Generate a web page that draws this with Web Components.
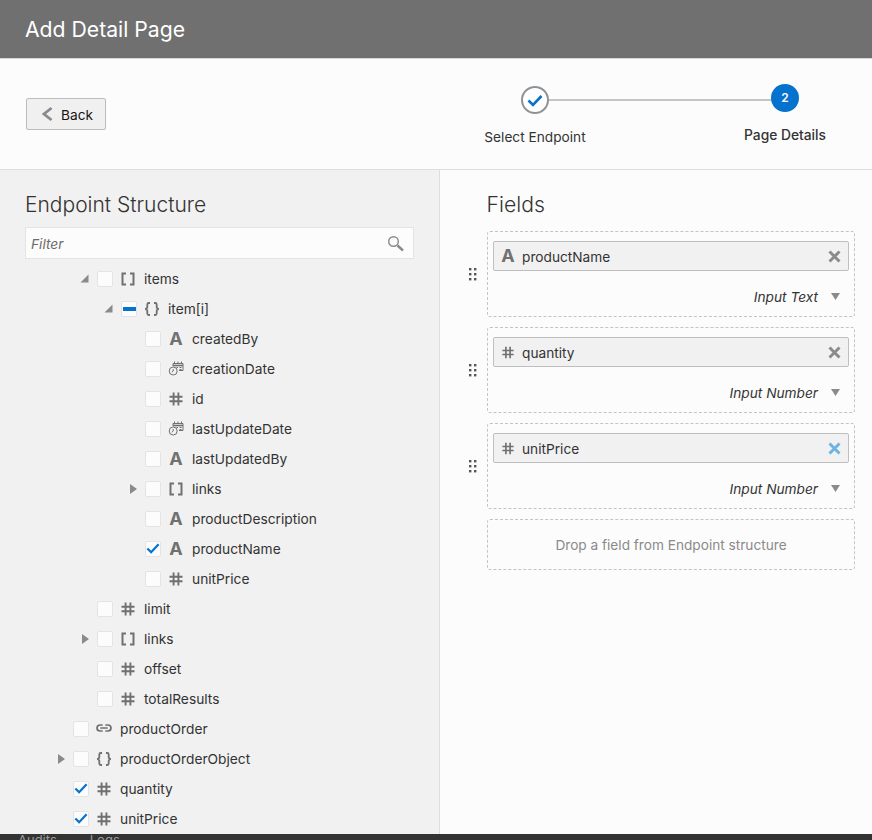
<!DOCTYPE html>
<html><head><meta charset="utf-8"><title>Add Detail Page</title>
<style>
html,body{margin:0;padding:0;height:840px;overflow:hidden;background:#fcfcfc}
body{font-family:Inter,"Liberation Sans",sans-serif;color:#333}
</style></head><body>
<app-shell>
  <page-header slot="header">Add Detail Page</page-header>
  <nav-band slot="band"></nav-band>
  <side-panel slot="left">
    <tree-row level="2" arrow="down" icon="arr">items</tree-row>
    <tree-row level="3" arrow="down" icon="obj" state="mixed">item[i]</tree-row>
    <tree-row level="4" icon="a">createdBy</tree-row>
    <tree-row level="4" icon="date">creationDate</tree-row>
    <tree-row level="4" icon="num">id</tree-row>
    <tree-row level="4" icon="date">lastUpdateDate</tree-row>
    <tree-row level="4" icon="a">lastUpdatedBy</tree-row>
    <tree-row level="4" arrow="right" icon="arr">links</tree-row>
    <tree-row level="4" icon="a">productDescription</tree-row>
    <tree-row level="4" icon="a" state="on">productName</tree-row>
    <tree-row level="4" icon="num">unitPrice</tree-row>
    <tree-row level="2" icon="num">limit</tree-row>
    <tree-row level="2" arrow="right" icon="arr">links</tree-row>
    <tree-row level="2" icon="num">offset</tree-row>
    <tree-row level="2" icon="num">totalResults</tree-row>
    <tree-row level="1" icon="link">productOrder</tree-row>
    <tree-row level="1" arrow="right" icon="obj">productOrderObject</tree-row>
    <tree-row level="1" icon="num" state="on">quantity</tree-row>
    <tree-row level="1" icon="num" state="on">unitPrice</tree-row>
  </side-panel>
  <fields-panel slot="right">
    <field-card icon="a" name="productName" type="Input Text"></field-card>
    <field-card icon="num" name="quantity" type="Input Number"></field-card>
    <field-card icon="num" name="unitPrice" type="Input Number" hot></field-card>
    <drop-zone>Drop a field from Endpoint structure</drop-zone>
  </fields-panel>
  <dock-strip slot="dock"></dock-strip>
</app-shell>
<script>
const ICONS={
 arr:`<svg width="16" height="14" viewBox="0 0 16 14" fill="none" stroke="#707070" stroke-width="2"><path d="M6 1.5H2.5V12.5H6M10 1.5H13.5V12.5H10"/></svg>`,
 obj:`<svg width="16" height="16" viewBox="0 0 16 16" fill="none" stroke="#707070" stroke-width="1.8"><path d="M6 2H4.8C3.8 2 3.3 2.5 3.3 3.4V6C3.3 7 2.6 7.8 1.2 8C2.6 8.2 3.3 9 3.3 10V12.6C3.3 13.5 3.8 14 4.8 14H6M10 2H11.2C12.2 2 12.7 2.5 12.7 3.4V6C12.7 7 13.4 7.8 14.8 8C13.4 8.2 12.7 9 12.7 10V12.6C12.7 13.5 12.2 14 11.2 14H10"/></svg>`,
 num:`<svg width="16" height="14" viewBox="0 0 16 14" fill="none" stroke="#707070" stroke-width="1.9"><path d="M5.6 .5V13.5M10.4 .5V13.5M1.5 4.7H14.5M1.5 9.3H14.5"/></svg>`,
 date:`<svg width="16" height="15" viewBox="0 0 16 15" fill="none" stroke="#707070" stroke-width="1"><path d="M5 5V2.5H15V9.5H11"/><path d="M6.5 .5V3M10 .5V3M13.5 .5V3"/><path d="M5 4.5H15" stroke-width="1.6"/><path d="M8.5 6.5H10M11.5 6.5H13.5M11.5 8.5H13.5"/><circle cx="5.2" cy="10" r="4"/><path d="M5.2 8V10L3.8 11.2"/></svg>`,
 link:`<svg width="16" height="14" viewBox="0 0 16 14" fill="none" stroke="#707070" stroke-width="1.7" stroke-linecap="round"><path d="M6 3H4.2C2.4 3 1 4.4 1 6S2.4 9 4.2 9H6M10 3H11.8C13.6 3 15 4.4 15 6S13.6 9 11.8 9H10M5 6H11"/></svg>`
};
function def(name,html){
  customElements.define(name,class extends HTMLElement{
    connectedCallback(){
      if(this.shadowRoot)return;
      const r=this.attachShadow({mode:'open'});
      r.innerHTML=typeof html==='function'?html(this):html;
    }
  });
}
const glyph=i=>i==='a'?`<span class="a">A</span>`:ICONS[i];

def('app-shell',`<style>
:host{display:grid;width:872px;height:840px;grid-template-columns:440px 432px;grid-template-rows:59px 111px 664px 6px;overflow:hidden}
.h,.d,.b{grid-column:1/3;min-width:0}
::slotted(*){min-width:0;min-height:0}
</style>
<div class="h"><slot name="header"></slot></div>
<div class="b"><slot name="band"></slot></div>
<slot name="left"></slot><slot name="right"></slot>
<div class="d"><slot name="dock"></slot></div>`);

def('page-header',`<style>
:host{display:flex;align-items:center;box-sizing:border-box;height:59px;background:#707070;border-bottom:1px solid #d6d6d6;padding:2px 25px 0;color:#fff;font:400 21.2px/1 Inter,sans-serif;width:872px}
</style><slot></slot>`);

def('nav-band',`<style>
:host{display:flex;box-sizing:border-box;height:111px;justify-content:space-between;background:#fcfcfc;border-bottom:1px solid #dedede;padding:0 17px 0 26px;font:13.7px Inter,sans-serif;color:#333}
button{all:unset;box-sizing:border-box;margin-top:39px;width:80px;height:32px;display:flex;align-items:center;gap:7px;padding:1px 0 0 15px;background:#f0f0f0;border:1px solid #bcbcbc;border-radius:2px;font:13.7px Inter,sans-serif;color:#161513}
button svg{margin-top:-2px}
.stepper{width:390px}
.track{display:flex;align-items:flex-start;padding:25px 56px 0}
.done{box-sizing:border-box;width:28px;height:28px;border:2px solid #8f9396;border-radius:50%;margin-top:2px;display:flex;align-items:center;justify-content:center;background:#fff}
.line{flex:1;height:2px;background:#c4c4c4;margin-top:15px}
.cur{width:28px;height:28px;border-radius:50%;background:#0572ce;color:#fff;font:600 12px/28px Inter,sans-serif;text-align:center}
.labels{display:flex;justify-content:space-between;align-items:flex-start}
.labels div{width:140px;text-align:center}
.l1{margin-top:15px}.l2{margin-top:13px;font-weight:500;font-size:13.8px}
</style>
<button><svg width="12" height="16" viewBox="0 0 12 16" fill="none" stroke="#8a8a8a" stroke-width="2.8"><path d="M9.5 2L2 8L9.5 14"/></svg>Back</button>
<div class="stepper"><div class="track">
<div class="done"><svg width="16" height="13" viewBox="0 0 16 13" fill="none" stroke="#0572ce" stroke-width="2.6"><path d="M1.5 6.5L6 11L14.5 2"/></svg></div>
<div class="line"></div><div class="cur">2</div></div>
<div class="labels"><div class="l1">Select Endpoint</div><div class="l2">Page Details</div></div></div>`);

def('side-panel',`<style>
:host{display:block;box-sizing:border-box;background:#f1f1f1;border-right:1px solid #dedede;overflow:hidden;padding-top:22px}
h2{margin:0 0 0 25px;font:300 21px/26px Inter,sans-serif;color:#333}
.filter{box-sizing:border-box;margin:9px 25px 5px;width:389px;height:32px;background:#fcfcfc;border:1px solid #e4e4e4;display:flex;align-items:center;justify-content:space-between;padding:1px 8px 0 5px;font:italic 13.7px Inter,sans-serif;color:#6b6b6b}
.filter svg{margin-top:-1px}
</style>
<h2>Endpoint Structure</h2>
<div class="filter"><span>Filter</span><svg width="18" height="17" viewBox="0 0 18 17" fill="none" stroke="#8a8a8a"><circle cx="6.5" cy="6.5" r="4.8" stroke-width="1.4"/><path d="M10.5 10.5L16 15.5" stroke-width="2.4"/></svg></div>
<slot></slot>`);

def('tree-row',e=>{
 const lv=+e.getAttribute('level'),ar=e.getAttribute('arrow'),st=e.getAttribute('state'),ic=e.getAttribute('icon');
 const arrow=ar==='down'?`<svg width="9" height="9" viewBox="0 0 9 9"><path d="M8.5 .5V8.5H.5Z" fill="#8a8a8a"/></svg>`:ar==='right'?`<svg width="7" height="10" viewBox="0 0 7 10"><path d="M0 0L7 5L0 10Z" fill="#8a8a8a"/></svg>`:'';
 const box=st==='on'?`<svg width="15" height="13" viewBox="0 0 15 13" fill="none" stroke="#0572ce" stroke-width="2.4"><path d="M1.5 6.5L5.5 10.5L13.5 2"/></svg>`:st==='mixed'?`<i></i>`:'';
 return `<style>
:host{display:flex;align-items:center;height:30px;padding-left:${lv*24+49}px;font:13.75px Inter,sans-serif;color:#333}
.arw{width:24px;margin-left:-24px;display:flex;justify-content:flex-end;padding-right:8px;margin-top:-1px;box-sizing:border-box}
.cb{box-sizing:border-box;width:16px;height:16px;background:#fcfcfc;border:1px solid #e4e4e4;border-radius:2px;display:flex;align-items:center;justify-content:center;flex:none;margin:-1px 7px 0 0}
.cb i{width:13px;height:4px;background:#0572ce}
.ic{width:16px;display:flex;align-items:center;justify-content:center;margin:-1px 8px 0 0;flex:none}
.a{font:700 18px/1 Inter,sans-serif;color:#707070}
</style><div class="arw">${arrow}</div><div class="cb">${box}</div><div class="ic">${glyph(ic)}</div><slot></slot>`;
});

def('fields-panel',`<style>
:host{display:flex;flex-direction:column;gap:10px;padding:22px 17px 0 47px;box-sizing:border-box;background:#fcfcfc;overflow:hidden}
h2{margin:0 0 4px -.5px;font:300 21.2px/25px Inter,sans-serif;color:#333}
</style><h2>Fields</h2><slot></slot>`);

def('field-card',e=>{
 const ic=e.getAttribute('icon'),hot=e.hasAttribute('hot');
 return `<style>
:host{display:block;position:relative;box-sizing:border-box;height:86px;border:1px dashed #c4c4c4;border-radius:3px;padding:9px 5px 0;font:13.7px Inter,sans-serif;color:#333}
.chip{box-sizing:border-box;height:30px;display:flex;align-items:center;background:#f1f1f1;border:1px solid #bfbfbf;border-radius:2px;padding:0 7px}
.ic{width:14px;display:flex;justify-content:center;margin-right:7px}.ic svg{width:14px;height:13px}
.a{font:700 18px/1 Inter,sans-serif;color:#707070}
.name{flex:1;padding-top:1px}
.type{display:flex;justify-content:flex-end;align-items:center;gap:13px;padding:16px 9px 0 0;font-style:italic;height:20px;color:#333}
.type svg{margin-top:-1px}
.grip{position:absolute;left:-19px;top:36px}
</style>
<svg class="grip" width="8" height="13" viewBox="0 0 8 13" fill="#555"><rect x="0" y="0" width="2.4" height="2.4"/><rect x="5" y="0" width="2.4" height="2.4"/><rect x="0" y="5" width="2.4" height="2.4"/><rect x="5" y="5" width="2.4" height="2.4"/><rect x="0" y="10" width="2.4" height="2.4"/><rect x="5" y="10" width="2.4" height="2.4"/></svg>
<div class="chip"><span class="ic">${glyph(ic)}</span><span class="name">${e.getAttribute('name')}</span>
<svg width="13" height="13" viewBox="0 0 13 13" fill="none" stroke="${hot?'#6db3e4':'#8a8a8a'}" stroke-width="2.9"><path d="M1.5 1.5L11.5 11.5M11.5 1.5L1.5 11.5"/></svg></div>
<div class="type"><span>${e.getAttribute('type')}</span><svg width="9" height="7" viewBox="0 0 9 7"><path d="M0 0H9L4.5 7Z" fill="#8a8a8a"/></svg></div>`;
});

def('drop-zone',`<style>
:host{display:flex;box-sizing:border-box;height:51px;align-items:center;justify-content:center;border:1px dashed #c4c4c4;border-radius:3px;font:13.65px Inter,sans-serif;color:#8a8a8a}
</style><slot></slot>`);

def('dock-strip',`<style>
:host{display:flex;height:6px;overflow:hidden;background:#333;color:#999;font:13px/13px Inter,sans-serif;padding-left:18px;gap:33px}
</style><span>Audits</span><span>Logs</span>`);
</script>
</body></html>
